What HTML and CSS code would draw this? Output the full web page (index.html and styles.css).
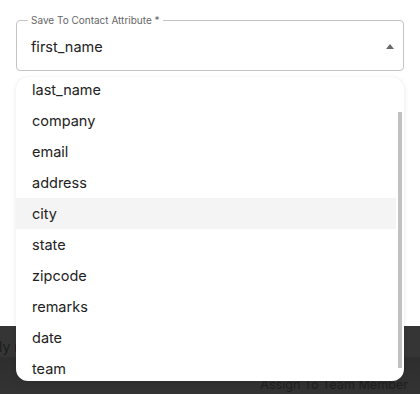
FILE: index.html
```html
<!DOCTYPE html>
<html>
<head>
<meta charset="utf-8">
<link rel="stylesheet" href="styles.css">
</head>
<body>
<div class="page">
  <div class="top">
    <fieldset class="field">
      <legend class="label">Save To Contact Attribute *</legend>
      <div class="value-row">
        <span class="value">first_name</span>
        <span class="arrow"></span>
      </div>
    </fieldset>
  </div>
  <div class="bottom">
    <div class="behind-text">ly r</div>
    <div class="assign">Assign To Team Member</div>
  </div>

  <div class="menu">
    <ul class="list">
      <li class="item">last_name</li>
      <li class="item">company</li>
      <li class="item">email</li>
      <li class="item">address</li>
      <li class="item hover">city</li>
      <li class="item">state</li>
      <li class="item">zipcode</li>
      <li class="item">remarks</li>
      <li class="item">date</li>
      <li class="item">team</li>
    </ul>
    <div class="scrollbar"><div class="thumb"></div></div>
  </div>
</div>
</body>
</html>
```

FILE: styles.css
```css
* { box-sizing: border-box; }
html, body { margin: 0; padding: 0; }
body {
  width: 420px;
  height: 394px;
  overflow: hidden;
  background: #fff;
  font-family: "Inter", "Open Sans", sans-serif;
  color: #222;
}
.page {
  position: relative;
  width: 420px;
  height: 394px;
  display: flex;
  flex-direction: column;
}
.top {
  height: 326px;
  padding: 14px 16px 0 16px;
  background: #fff;
}
.field {
  margin: 0;
  width: 388px;
  height: 57px;
  border: 1px solid #c4c4c4;
  border-radius: 4px;
  padding: 0 9px 0 14px;
}
.label {
  font-size: 10px;
  line-height: 12px;
  color: #666;
  padding: 0 3px;
  margin-left: -3px;
}
.value-row {
  height: 44px;
  display: flex;
  align-items: center;
  justify-content: space-between;
  padding-bottom: 4px;
}
.value {
  font-size: 14.5px;
  color: #222;
}
.arrow {
  width: 0;
  height: 0;
  border-left: 4px solid transparent;
  border-right: 4px solid transparent;
  border-bottom: 5px solid #6a6a6a;
}
.bottom {
  flex: 1;
  position: relative;
  background:
    radial-gradient(circle at 420px 345px, #3a3a3a 0, #3a3a3a 22px, transparent 24px),
    radial-gradient(circle at 150px 400px, #3d3d3d 0, #3d3d3d 30px, transparent 32px),
    linear-gradient(#353535 0, #353535 30px, #2e2e2e 32px, #333 100%);
  display: flex;
  flex-direction: column;
}
.behind-text {
  margin-top: 13px;
  margin-left: -1px;
  font-size: 14px;
  line-height: 16px;
  color: #1c1c1c;
}
.assign {
  margin-top: auto;
  align-self: flex-end;
  margin-right: 12px;
  margin-bottom: 0;
  font-size: 12.6px;
  line-height: 18px;
  color: #1e1e1e;
}
.menu {
  position: absolute;
  left: 16px;
  top: 77px;
  width: 388px;
  height: 304px;
  background: #fff;
  border-radius: 12px;
  box-shadow: 0 2px 6px rgba(0,0,0,0.08), 0 0 1px rgba(0,0,0,0.1);
  overflow: hidden;
  display: flex;
}
.list {
  list-style: none;
  margin: -3px 0 0 0;
  padding: 0;
  width: 380px;
}
.item {
  height: 31px;
  display: flex;
  align-items: center;
  padding-left: 16px;
  font-size: 14.5px;
  color: #222;
}
.item.hover { background: #f4f4f4; }
.scrollbar {
  width: 8px;
  position: relative;
}
.thumb {
  position: absolute;
  left: 2px;
  top: 35px;
  width: 4px;
  height: 256px;
  background: #c1c1c1;
}
```
